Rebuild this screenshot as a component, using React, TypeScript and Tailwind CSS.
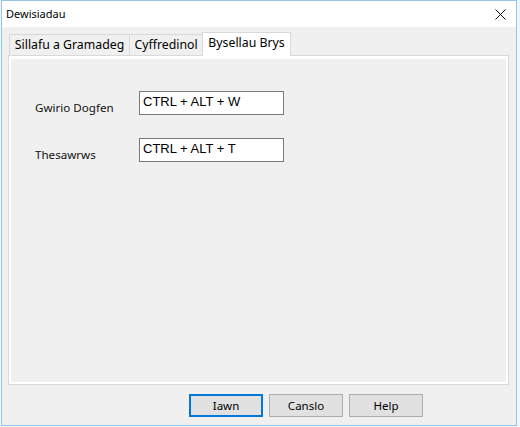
import React from 'react'

const font = { fontFamily: '"Noto Sans", "Liberation Sans", sans-serif' }

function Tab({ label, active, width }: { label: string; active?: boolean; width: string }) {
    return active ? (
        <div className={`relative z-10 -mb-px h-[24px] ${width} border border-b-0 border-[#d9d9d9] bg-white flex items-center justify-center text-[12.3px] text-black`}>
            <span className='-mt-[2px]'>{label}</span>
        </div>
    ) : (
        <div className={`h-[21px] ${width} border border-b-0 border-r-0 border-[#d9d9d9] bg-[#f0f0f0] flex items-center justify-center text-[12.3px] text-black`}>
            <span className='mt-[1px]'>{label}</span>
        </div>
    )
}

function Row({ label, value }: { label: string; value: string }) {
    return (
        <div className='flex items-start h-[24px]'>
            <div className='w-[128px] pl-[24px] pt-[9px] text-[11.6px] leading-[16px] text-[#111]'>{label}</div>
            <div className='w-[145px] h-[24px] border border-[#7a7a7a] bg-white pl-[3px] text-[13px] leading-[20px] text-black' style={{ fontFamily: '"Liberation Sans", Arial, sans-serif' }}>
                {value}
            </div>
        </div>
    )
}

function Btn({ label, primary }: { label: string; primary?: boolean }) {
    return (
        <button className={`w-[74px] h-[23px] bg-[#e1e1e1] text-[11.5px] text-black flex items-center justify-center ${primary ? 'border-2 border-[#0078d7]' : 'border border-[#adadad]'}`}>
            {label}
        </button>
    )
}

export default function App() {
    return (
        <div className='w-[520px] h-[427px] bg-[#f4f4f4] overflow-hidden' style={font}>
            <div className='ml-[1px] w-[516px] h-[426px] border border-[#95c4ef] bg-[#f0f0f0] flex flex-col'>
                {/* title bar */}
                <div className='h-[26px] bg-white flex items-center justify-between pl-[4px] pr-[10px]'>
                    <span className='text-[11px] text-black'>Dewisiadau</span>
                    <svg width='11' height='11' viewBox='0 0 11 11' className='mt-[1px]'>
                        <path d='M0.5 0.5 L10.5 10.5 M10.5 0.5 L0.5 10.5' stroke='#111' strokeWidth='1' />
                    </svg>
                </div>
                <div className='pl-[6px] pr-[7px] pt-[5px] flex flex-col'>
                    <div className='flex items-end h-[23px] pl-[1px]'>
                        <Tab label='Sillafu a Gramadeg' width='w-[120px]' />
                        <Tab label='Cyffredinol' width='w-[73px]' />
                        <Tab label='Bysellau Brys' width='w-[89px]' active />
                    </div>
                    <div className='h-[330px] border border-[#d9d9d9] bg-white p-[2px] pt-[3px]'>
                        <div className='h-full bg-[#f0f0f0] pt-[32px] flex flex-col gap-[23px]'>
                            <Row label='Gwirio Dogfen' value='CTRL + ALT + W' />
                            <Row label='Thesawrws' value='CTRL + ALT + T' />
                        </div>
                    </div>
                    <div className='mt-[9px] flex gap-[6px] pl-[181px]'>
                        <Btn label='Iawn' primary />
                        <Btn label='Canslo' />
                        <Btn label='Help' />
                    </div>
                </div>
            </div>
        </div>
    )
}
